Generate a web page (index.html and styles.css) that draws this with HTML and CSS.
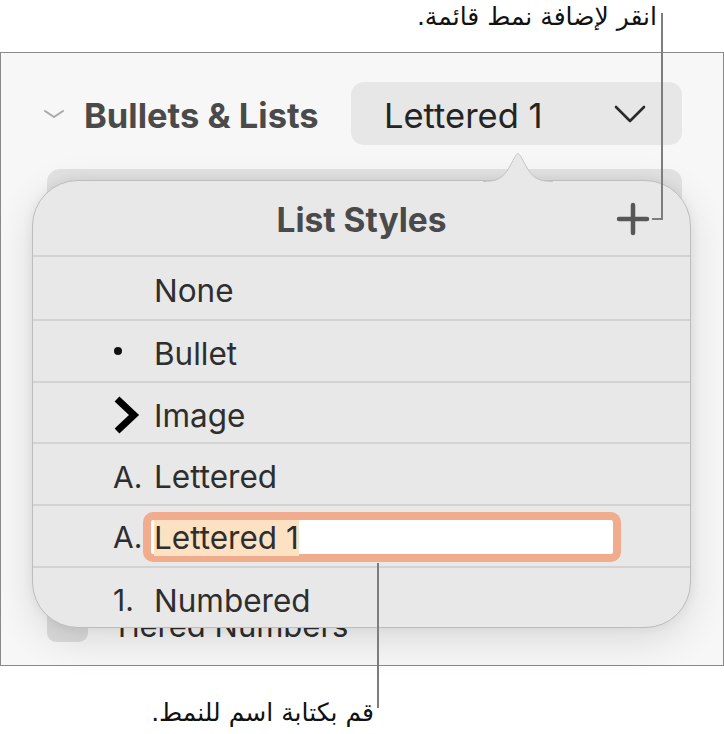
FILE: index.html
```html
<!DOCTYPE html>
<html lang="ar">
<head>
<meta charset="utf-8">
<link rel="stylesheet" href="styles.css">
</head>
<body>
<div class="page">
  <div class="callout callout-top" dir="rtl">انقر لإضافة نمط قائمة.</div>
  <div class="panel" dir="ltr">
    <div class="section-head">
      <svg class="disclosure" width="22" height="10" viewBox="0 0 22 10"><polyline points="2,2 11,8 20,2" fill="none" stroke="#a8a8a8" stroke-width="2" stroke-linecap="round" stroke-linejoin="round"/></svg>
      <h2 class="section-title">Bullets &amp; Lists</h2>
      <div class="dropdown">
        <span class="dropdown-label">Lettered 1</span>
        <svg class="dropdown-chev" width="32" height="18" viewBox="0 0 32 18"><polyline points="2,2 16,16 30,2" fill="none" stroke="#2a2a2a" stroke-width="2.6" stroke-linecap="round" stroke-linejoin="round"/></svg>
      </div>
    </div>
    <div class="bg-select"></div>
    <div class="check-row">
      <span class="checkbox"></span>
      <span class="check-label">Tiered Numbers</span>
    </div>

    <div class="popover">
      <svg class="pop-arrow" width="70" height="30" viewBox="0 0 70 30">
        <path d="M0 30 C13 30 19 27 25 18 L30 9 C32 5 34 2 35 2 C36 2 38 5 40 9 L45 18 C51 27 57 30 70 30 Z" fill="#e8e8e8"/>
        <path d="M0 29.5 C13 29.5 19 26.5 25 17.5 L30 8.5 C32 4.5 34 1.5 35 1.5 C36 1.5 38 4.5 40 8.5 L45 17.5 C51 26.5 57 29.5 70 29.5" fill="none" stroke="#c4c4c4" stroke-width="1"/>
      </svg>
      <div class="pop-head">
        <span class="pop-title">List Styles</span>
        <svg class="plus" width="34" height="34" viewBox="0 0 34 34"><path d="M17 3 V31 M3 17 H31" stroke="#575757" stroke-width="4.5" stroke-linecap="round"/></svg>
      </div>
      <div class="pop-row row-first"><span class="marker"></span><span class="label">None</span></div>
      <div class="pop-row"><span class="marker"><span class="dot"></span></span><span class="label">Bullet</span></div>
      <div class="pop-row row-short"><span class="marker"><svg width="28" height="40" viewBox="0 0 28 40"><polyline points="4,4 21,20 4,36" fill="none" stroke="#000" stroke-width="7" stroke-linejoin="miter"/></svg></span><span class="label">Image</span></div>
      <div class="pop-row"><span class="marker">A.</span><span class="label">Lettered</span></div>
      <div class="pop-row row-field"><span class="marker">A.</span><div class="field"><span class="sel">Lettered 1</span></div></div>
      <div class="pop-row row-short"><span class="marker">1.</span><span class="label">Numbered</span></div>
    </div>
  </div>
  <div class="callout callout-bottom" dir="rtl">قم بكتابة اسم للنمط.</div>

  <div class="leader leader-top-v"></div>
  <div class="leader leader-top-h"></div>
  <div class="leader leader-bottom-v"></div>
</div>
</body>
</html>
```
FILE: styles.css
```css
* { box-sizing: border-box; }
html, body { margin: 0; padding: 0; background: #ffffff; }
body { font-family: Inter, "Liberation Sans", sans-serif; color: #2e2e2e; }

.page { position: relative; width: 724px; height: 734px; overflow: hidden; }

.callout {
  font-family: "DejaVu Sans", "Noto Sans", sans-serif;
  color: #111;
}
.callout-top { height: 52px; padding: 2px 0 0 0; width: 657px; text-align: right; font-size: 25px; line-height: 30px; }
.callout-bottom { width: 374px; padding-top: 32px; text-align: right; font-size: 25px; line-height: 30px; }

.panel {
  position: relative;
  height: 614px;
  border: 1px solid #8a8a8a;
  background: #f7f7f7;
  padding: 29px 41px 0 46px;
}

.section-head { display: flex; align-items: center; height: 63px; }
.disclosure { margin-left: -4px; margin-right: 19px; }
.section-title { margin: 0; font-size: 34.5px; font-weight: 700; color: #4a4a4a; flex: 1; white-space: nowrap; padding-top: 3px; }
.dropdown {
  width: 331px; height: 63px; border-radius: 13px; background: #e7e7e7;
  display: flex; align-items: center; padding: 3px 36px 0 33px;
}
.dropdown-label { flex: 1; font-size: 34.5px; color: #242424; }
.dropdown-chev { margin-top: -3px; }

.bg-select { margin-top: 24px; height: 60px; border-radius: 13px; background: #e2e2e2; }
.check-row { margin-top: 376px; display: flex; align-items: center; gap: 24px; height: 37px; }
.checkbox { width: 41px; height: 37px; border-radius: 9px; background: #dcdcdc; }
.check-label { font-size: 31px; color: #2e2e2e; padding-top: 4px; }

.popover {
  position: absolute; left: 31px; top: 127px; width: 659px; height: 448px;
  background: #e8e8e8; border: 1px solid #bdbdbd; border-radius: 46px;
  box-shadow: 0 12px 40px rgba(0,0,0,0.12), 0 0 12px rgba(0,0,0,0.06);
}
.pop-arrow { position: absolute; left: 450px; top: -29px; }
.pop-head { height: 74px; display: flex; align-items: center; justify-content: center; position: relative; padding-top: 4px; }
.pop-title { font-size: 33.5px; font-weight: 700; color: #4a4a4a; }
.plus { position: absolute; left: 583px; top: 21px; }

.pop-row {
  height: 62px; border-top: 2px solid #d3d3d3;
  display: flex; align-items: center; padding: 5px 0 0 80px;
  font-size: 31.5px; color: #2e2e2e;
}
.row-first { height: 64px; }
.row-short { height: 61px; }
.row-field { padding-top: 1px; }
.marker { width: 41px; display: flex; align-items: center; font-size: 30px; }
.dot { width: 8px; height: 8px; border-radius: 50%; background: #111; margin-left: 1px; margin-top: -6px; }
.field {
  margin-left: -11px; width: 478px; height: 50px;
  border: 8px solid #f0ac8c; border-radius: 10px; background: #fff;
  display: flex; align-items: center; padding: 3px 0 0 3px;
}
.sel { background: #fde1c3; line-height: 36px; }

.leader { position: absolute; background: #7d7d7d; }
.leader-top-v { left: 661px; top: 13px; width: 2px; height: 207px; }
.leader-top-h { left: 652px; top: 218px; width: 11px; height: 2px; }
.leader-bottom-v { left: 377px; top: 563px; width: 2px; height: 145px; }
```
